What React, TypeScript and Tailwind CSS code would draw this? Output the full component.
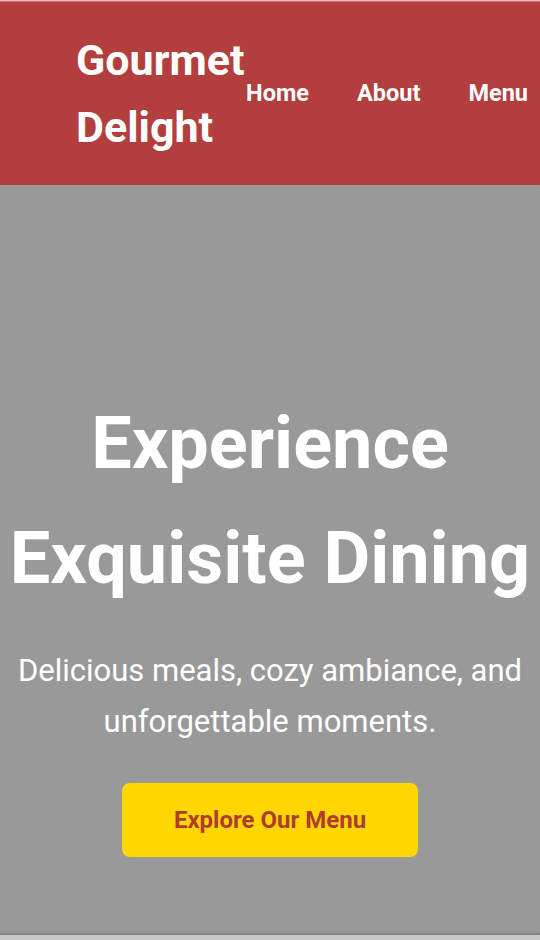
export default function App() {
  return (
    <div className="min-h-[940px] flex flex-col bg-[#c4c4c4] font-['Roboto',sans-serif]">
      <div className="h-[2px] bg-gradient-to-b from-[#f3d9d9] to-[#c05454]" />
      <header className="flex items-center h-[183px] bg-[#b33e3e] pl-[76px] pr-[12px] text-white">
        <div className="w-[170px] shrink-0 text-[43px] font-bold leading-[67px]">Gourmet Delight</div>
        <nav className="flex gap-[48px] ml-auto text-[23.5px] font-bold">
          <a href="#">Home</a>
          <a href="#">About</a>
          <a href="#">Menu</a>
        </nav>
      </header>
      <section className="flex flex-col items-center h-[750px] bg-[#999999] pt-[201px] text-center text-white shadow-[inset_0_-3px_3px_-2px_rgba(0,0,0,0.25)]">
        <h1 className="text-[72px] font-bold leading-[1.6]">
          Experience
          <br />
          Exquisite Dining
        </h1>
        <p className="mt-[29px] text-[31px] leading-[51px]">
          Delicious meals, cozy ambiance, and
          <br />
          unforgettable moments.
        </p>
        <button className="mt-[36px] w-[296px] h-[74px] rounded-[8px] bg-[#ffd700] text-[24px] font-bold text-[#b03c30]">
          Explore Our Menu
        </button>
      </section>
      <div className="h-[5px] bg-[#c8c8c8]" />
    </div>
  );
}
